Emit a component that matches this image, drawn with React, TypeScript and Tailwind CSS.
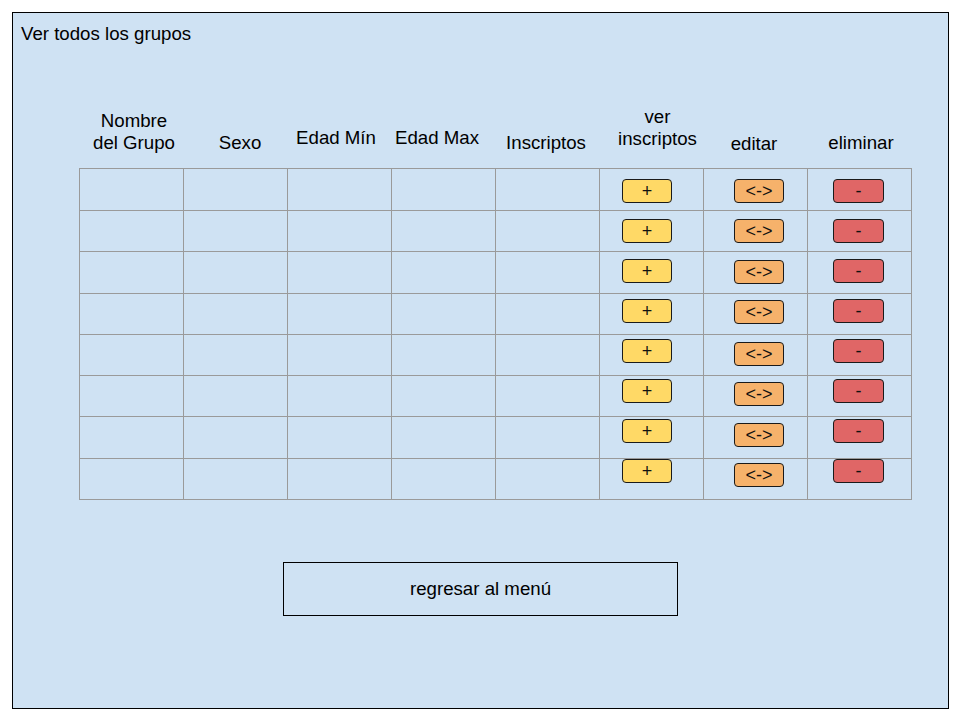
const headers = [
  { label: <>Nombre<br />del Grupo</>, cls: 'pb-[14px] pl-[4px]' },
  { label: 'Sexo', cls: 'pb-[14px] pl-[8px]' },
  { label: 'Edad Mín', cls: 'pb-[19px] pr-[8px]' },
  { label: 'Edad Max', cls: 'pb-[19px] pr-[14px]' },
  { label: 'Inscriptos', cls: 'pb-[14px] pr-[4px]' },
  { label: <>ver<br />inscriptos</>, cls: 'pb-[18px] pl-[11px]' },
  { label: 'editar', cls: 'pb-[13px] pr-[4px]' },
  { label: 'eliminar', cls: 'pb-[14px] pl-[2px]' },
];

// row heights don't divide evenly, and the buttons drift a bit per row (as in the mockup)
const rows = [
  { h: 'h-[42px]', add: 'mt-[10px]', edit: 'mt-[10px]' },
  { h: 'h-[41px]', add: 'mt-[8px]', edit: 'mt-[8px]' },
  { h: 'h-[42px]', add: 'mt-[7px]', edit: 'mt-[8px]' },
  { h: 'h-[41px]', add: 'mt-[5px]', edit: 'mt-[6px]' },
  { h: 'h-[41px]', add: 'mt-[4px]', edit: 'mt-[7px]' },
  { h: 'h-[41px]', add: 'mt-[3px]', edit: 'mt-[6px]' },
  { h: 'h-[42px]', add: 'mt-[2px]', edit: 'mt-[6px]' },
  { h: 'h-[41px]', add: 'mt-[0px]', edit: 'mt-[4px]' },
];

const cell = 'w-[104px] shrink-0 border-r border-b border-[#9a9a9a]';
const btn = 'flex h-[24px] w-[50px] items-center justify-center rounded-[4px] border border-[#1a1a1a] text-[18px] leading-none text-[#111]';

export default function App() {
  return (
    <div className="h-[720px] w-[960px] bg-white pl-[12px] pt-[12px]">
      <div
        className="h-[697px] w-[937px] border border-black bg-[#cfe2f3] text-black"
        style={{ fontFamily: '"Liberation Sans", Arial, sans-serif' }}
      >
        <div className="pl-[8px] pt-[10px] text-[18.67px] leading-[21px]">Ver todos los grupos</div>

        <div className="ml-[66px] w-[833px]">
          {/* column headers */}
          <div className="flex h-[124px] items-end pl-[1px] text-[18.67px] leading-[22px]">
            {headers.map((hd, i) => (
              <div key={i} className={`w-[104px] shrink-0 text-center ${hd.cls}`}>
                {hd.label}
              </div>
            ))}
          </div>

          {/* grid */}
          <div className="border-l border-t border-[#9a9a9a]">
            {rows.map((r, i) => (
              <div key={i} className={`flex ${r.h}`}>
                <div className={cell} />
                <div className={cell} />
                <div className={cell} />
                <div className={cell} />
                <div className={cell} />
                <div className={cell}>
                  <div className={`${r.add} ml-[22px] ${btn} bg-[#ffd966]`}>+</div>
                </div>
                <div className={cell}>
                  <div className={`${r.edit} ml-[30px] ${btn} bg-[#f6b26b]`}>&lt;-&gt;</div>
                </div>
                <div className={cell}>
                  <div className={`${r.add} ml-[25px] ${btn} w-[51px] bg-[#e06666]`}>-</div>
                </div>
              </div>
            ))}
          </div>
        </div>

        <div className="mx-auto mt-[62px] flex h-[54px] w-[395px] items-center justify-center border border-black text-[18.67px]">
          regresar al menú
        </div>
      </div>
    </div>
  );
}
